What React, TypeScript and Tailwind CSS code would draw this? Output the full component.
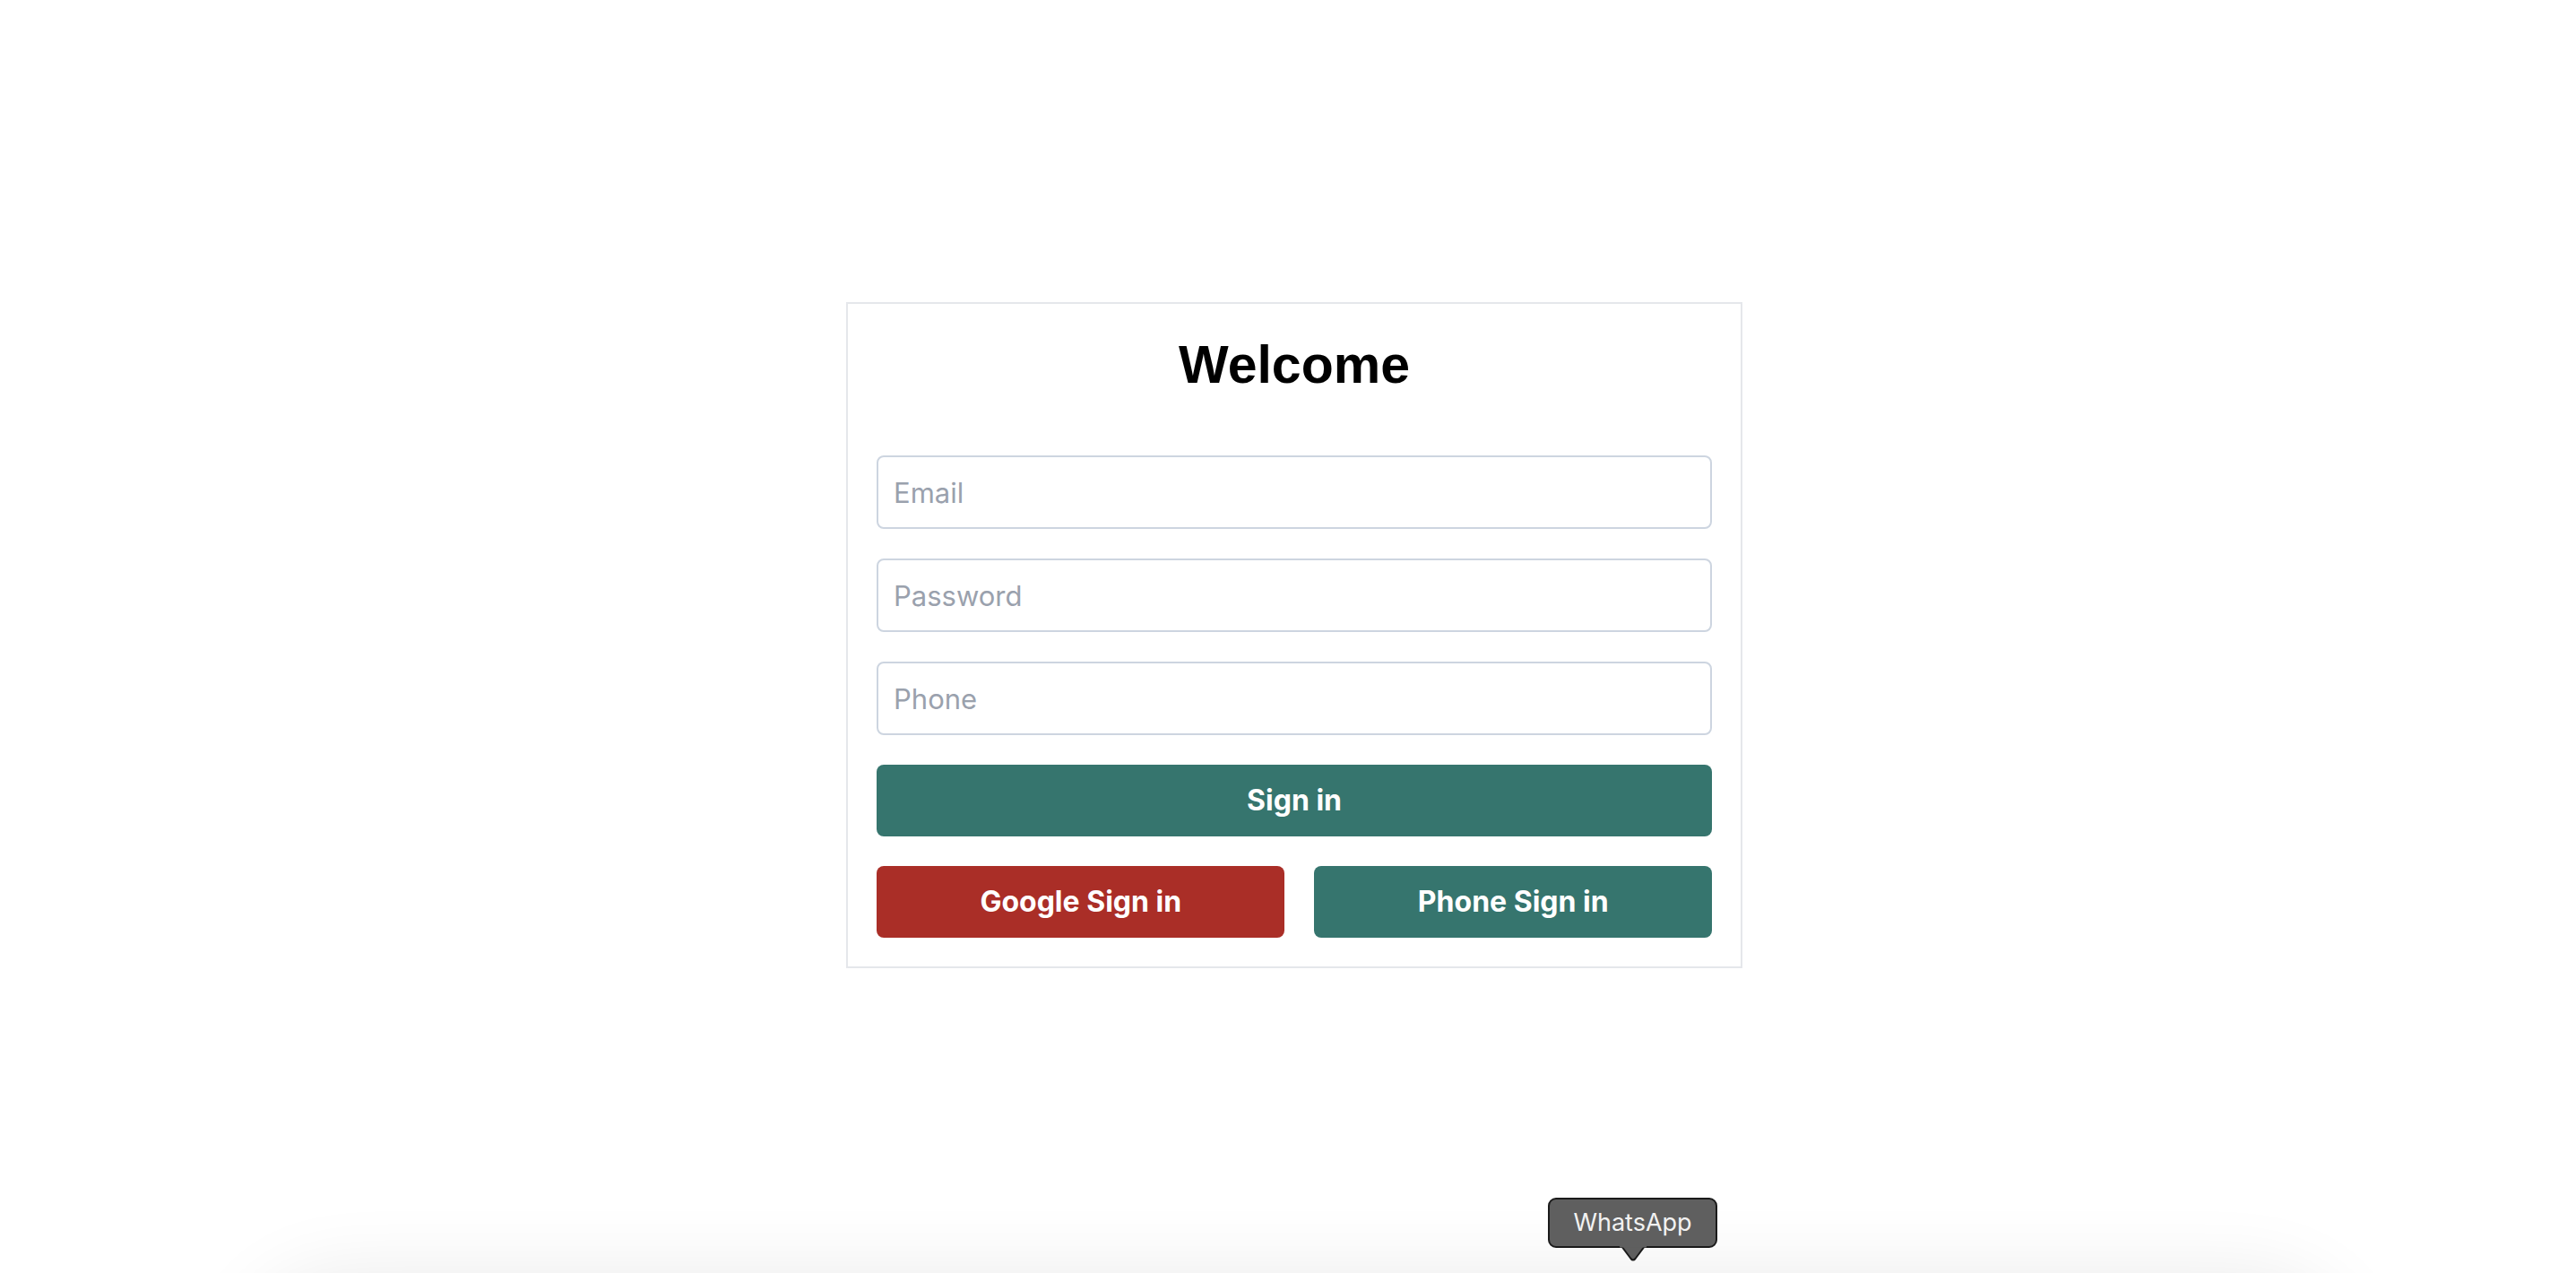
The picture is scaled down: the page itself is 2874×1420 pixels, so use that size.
import React from "react";

const fieldClass =
  "h-[82px] w-full rounded-lg border-2 border-[#cdd5e0] bg-white px-[17px] text-[31px] text-gray-800 outline-none placeholder:text-[#9aa1ad]";

function Field({ type, placeholder }: { type: string; placeholder: string }) {
  return <input type={type} placeholder={placeholder} className={fieldClass} />;
}

function WhatsAppTip() {
  return (
    <div className="absolute left-[1727px] top-[1336px] flex flex-col items-center">
      <div className="flex h-[56px] w-[189px] items-center justify-center rounded-[9px] border-2 border-[#1b1b1b] bg-[#5f5f5f] text-[27px] text-[#f2f2f2] [font-family:Inter,'Noto_Sans',sans-serif]">
        WhatsApp
      </div>
      <svg width="30" height="18" viewBox="0 0 30 18" className="-mt-[2px]">
        <path d="M2 0 L12.5 14 Q15 17 17.5 14 L28 0 Z" fill="#5f5f5f" stroke="#1b1b1b" strokeWidth="2" />
        <rect x="0" y="0" width="30" height="1.5" fill="#5f5f5f" />
      </svg>
    </div>
  );
}

export default function App() {
  return (
    <div className="relative h-[1420px] w-full overflow-hidden bg-white [font-family:Inter,'Noto_Sans',sans-serif]">
      <div className="flex h-full items-start justify-center pl-[14px] pt-[337px]">
        <div className="w-[1000px] border-2 border-[#e5e7eb] bg-white p-8">
          <h1 className="mb-[65px] text-center text-[59px] leading-[72px] font-bold text-black [font-family:'Liberation_Sans',Arial,sans-serif]">
            Welcome
          </h1>
          <div className="flex flex-col gap-[33px]">
            <Field type="email" placeholder="Email" />
            <Field type="password" placeholder="Password" />
            <Field type="tel" placeholder="Phone" />
            <button className="h-[80px] w-full rounded-lg bg-[#36756e] text-[32px] font-bold text-white">
              Sign in
            </button>
            <div className="flex gap-[33px]">
              <button className="h-[80px] flex-auto rounded-lg bg-[#aa2e27] text-[32px] font-bold text-white">
                Google Sign in
              </button>
              <button className="h-[80px] flex-auto rounded-lg bg-[#36756e] text-[32px] font-bold text-white">
                Phone Sign in
              </button>
            </div>
          </div>
        </div>
      </div>

      {/* dock shadow peeking in at the bottom edge */}
      <div className="absolute left-[320px] right-[300px] top-[1470px] h-[200px] rounded-[60px] bg-[#e2e2e2] shadow-[0_0_90px_45px_rgba(0,0,0,0.09)]" />

      <WhatsAppTip />
    </div>
  );
}
